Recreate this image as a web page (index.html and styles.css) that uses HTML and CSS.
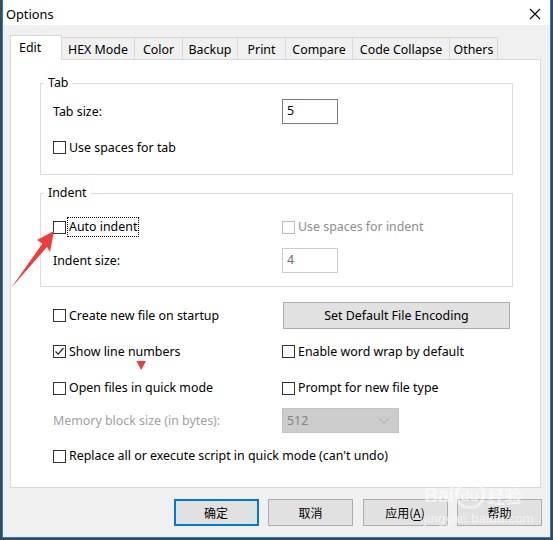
FILE: index.html
```html
<!DOCTYPE html>
<html>
<head>
<meta charset="utf-8">
<link rel="stylesheet" href="styles.css">
</head>
<body>
<div class="window">
  <div class="titlebar">
    <span class="title">Options</span>
    <svg class="close" width="12" height="12" viewBox="0 0 12 12"><path d="M1 1 L11 11 M11 1 L1 11" stroke="#000" stroke-width="1.1" fill="none"/></svg>
  </div>
  <div class="client">
    <div class="tabs">
      <div class="tab sel w-edit">Edit</div>
      <div class="tab w-hex">HEX Mode</div>
      <div class="tab w-color">Color</div>
      <div class="tab w-backup">Backup</div>
      <div class="tab w-print">Print</div>
      <div class="tab w-compare">Compare</div>
      <div class="tab w-code">Code Collapse</div>
      <div class="tab w-others last">Others</div>
    </div>
    <div class="panel">
      <fieldset class="group group-tab">
        <legend>Tab</legend>
        <div class="grow r-input">
          <span class="lbl">Tab size:</span>
          <div class="edit">5</div>
        </div>
        <div class="grow r-check2">
          <label class="chk"><span class="box"></span><span>Use spaces for tab</span></label>
        </div>
      </fieldset>
      <fieldset class="group group-indent">
        <legend>Indent</legend>
        <div class="grow r-auto">
          <label class="chk"><span class="box"></span><span class="focus">Auto indent</span></label>
          <label class="chk dis"><span class="box"></span><span>Use spaces for indent</span></label>
        </div>
        <div class="grow r-input2">
          <span class="lbl">Indent size:</span>
          <div class="edit dis">4</div>
        </div>
      </fieldset>
      <div class="opts">
        <label class="chk"><span class="box"></span><span>Create new file on startup</span></label>
        <div class="btn wide">Set Default File Encoding</div>
        <label class="chk"><span class="box on"><svg width="11" height="11" viewBox="0 0 11 11"><path d="M1.5 5.5 L4.2 8.2 L9.5 2" stroke="#222" stroke-width="1.2" fill="none"/></svg></span><span>Show line numbers</span></label>
        <label class="chk"><span class="box"></span><span>Enable word wrap by default</span></label>
        <label class="chk"><span class="box"></span><span>Open files in quick mode</span></label>
        <label class="chk"><span class="box"></span><span>Prompt for new file type</span></label>
        <span class="lbl dis">Memory block size (in bytes):</span>
        <div class="select"><span>512</span><svg width="10" height="6" viewBox="0 0 10 6"><path d="M0.5 0.5 L5 5 L9.5 0.5" stroke="#a8a8a8" stroke-width="1" fill="none"/></svg></div>
        <label class="chk span2"><span class="box"></span><span>Replace all or execute script in quick mode (can't undo)</span></label>
      </div>
    </div>
    <div class="buttons">
      <div class="btn dlg default">确定</div>
      <div class="btn dlg">取消</div>
      <div class="btn dlg">应用(<u>A</u>)</div>
      <div class="btn dlg">帮助</div>
    </div>
  </div>
</div>
<svg class="marks" width="553" height="540" viewBox="0 0 553 540">
  <polygon points="54,231 37,240 42.5,243.5 11,288 47,247 50,252" fill="#f23a3a"/>
  <polygon points="136.5,361 146,361 141.2,370" fill="#f23a3a"/>
</svg>
<div class="watermark" aria-hidden="true">
  <div class="wm-top"><span class="wm-bai">Bai</span><span class="wm-paw">du</span><span class="wm-jy">经验</span></div>
  <div class="wm-url">jingyan.baidu.com</div>
</div>
</body>
</html>
```
FILE: styles.css
```css
html, body {
  margin: 0;
  padding: 0;
}
body {
  width: 553px;
  height: 540px;
  background: #3d4855;
  position: relative;
  overflow: hidden;
  font-family: "Noto Sans", "Noto Sans CJK SC", sans-serif;
  font-size: 12.4px;
  color: #000;
}
.window {
  margin-left: 2px;
  width: 547px;
  height: 537px;
  border: 1px solid #1883d7;
  border-top: none;
  background: #f0f0f0;
  display: flex;
  flex-direction: column;
}
.titlebar {
  height: 25px;
  box-sizing: border-box;
  background: #fff;
  display: flex;
  align-items: center;
  justify-content: space-between;
  padding: 2px 9px 0 3px;
}
.title {
  font-size: 12.8px;
  line-height: 16px;
}
.close {
  display: block;
}
.client {
  flex: 1;
  padding: 10px 9px 0 7px;
  display: flex;
  flex-direction: column;
}
.tabs {
  height: 24px;
  display: flex;
  align-items: flex-end;
}
.tab {
  box-sizing: border-box;
  height: 22px;
  border: 1px solid #d9d9d9;
  border-right: none;
  border-bottom: none;
  background: #f0f0f0;
  text-align: center;
  line-height: 20px;
  padding-top: 2px;
  white-space: nowrap;
}
.tab.last {
  border-right: 1px solid #d9d9d9;
}
.tab.sel {
  height: 25px;
  margin-bottom: -1px;
  background: #fff;
  border-right: 1px solid #d9d9d9;
  position: relative;
  z-index: 1;
  text-align: left;
  padding-left: 8px;
  padding-top: 1px;
  line-height: 22px;
}
.tab.sel + .tab { border-left: none; }
.w-edit { width: 52px; }
.w-hex { width: 72px; }
.w-color { width: 48px; }
.w-backup { width: 55px; }
.w-print { width: 48px; }
.w-compare { width: 67px; }
.w-code { width: 97px; }
.w-others { width: 49px; }

.panel {
  box-sizing: border-box;
  height: 429px;
  border: 1px solid #d9d9d9;
  background: #fff;
  padding: 15px 27px 0 29px;
  display: flex;
  flex-direction: column;
}
.group {
  margin: 0;
  border: 1px solid #dcdcdc;
  padding: 0 12px;
  min-width: 0;
}
.group legend {
  padding: 0 4px;
  margin-left: -9px;
  line-height: 16px;
}
.group-tab {
  padding-top: 8px;
  padding-bottom: 18px;
}
.group-indent {
  margin-top: 10px;
  padding-top: 17px;
  padding-bottom: 13px;
}
.grow {
  display: grid;
  grid-template-columns: 229px 1fr;
  align-items: center;
}
.r-input { height: 25px; }
.r-check2 { height: 17px; margin-top: 15px; }
.r-auto { height: 18px; }
.r-input2 { height: 25px; margin-top: 12px; }

.lbl { line-height: 16px; }
.dis { color: #a0a0a0; }

.edit {
  box-sizing: border-box;
  width: 56px;
  height: 25px;
  border: 1px solid #7a7a7a;
  padding-left: 4px;
  line-height: 22px;
}
.edit.dis {
  border-color: #cccccc;
  color: #6d6d6d;
}

.chk {
  display: flex;
  align-items: center;
  white-space: nowrap;
  line-height: 16px;
}
.box {
  box-sizing: border-box;
  width: 13px;
  height: 13px;
  border: 1px solid #333;
  background: #fff;
  margin-right: 3px;
  flex: none;
  display: flex;
  align-items: center;
  justify-content: center;
}
.chk.dis .box { border-color: #bcbcbc; }
.chk.dis { color: #8c8c8c; }
.box svg { display: block; }
.focus {
  outline: 1px dotted #000;
  outline-offset: 0;
  padding: 1px 1px 1px 1px;
  margin-left: -1px;
}

.opts {
  margin-left: 13px;
  margin-top: 15px;
  display: grid;
  grid-template-columns: 229px 1fr;
  grid-template-rows: 27px 45px 28px 37px 34px;
  align-items: center;
}
.span2 { grid-column: 1 / 3; }

.btn {
  box-sizing: border-box;
  background: #e1e1e1;
  border: 1px solid #adadad;
  display: flex;
  align-items: center;
  justify-content: center;
  white-space: nowrap;
}
.btn.wide {
  width: 227px;
  height: 27px;
  margin-left: 1px;
}
.select {
  box-sizing: border-box;
  width: 117px;
  height: 25px;
  background: #cccccc;
  border: 1px solid #c2c2c2;
  color: #838383;
  display: flex;
  align-items: center;
  justify-content: space-between;
  padding: 0 9px 0 4px;
}
.select svg { display: block; }

.buttons {
  margin-top: 11px;
  display: flex;
  justify-content: flex-end;
  gap: 9.5px;
  margin-right: -1px;
}
.btn.dlg {
  width: 85px;
  height: 27px;
  font-family: "Noto Sans CJK SC", sans-serif;
  font-size: 12px;
}
.btn.dlg.default {
  border: 2px solid #0078d7;
}
.btn.dlg u { text-underline-offset: 2px; }

.marks {
  position: absolute;
  left: 0;
  top: 0;
  pointer-events: none;
}
.watermark {
  position: absolute;
  left: 424px;
  top: 478px;
  color: rgba(255, 255, 255, 0.6);
  pointer-events: none;
  font-family: "Liberation Sans", sans-serif;
}
.wm-top {
  display: flex;
  align-items: center;
  height: 34px;
}
.wm-bai {
  font-size: 20px;
  font-weight: bold;
  letter-spacing: -0.5px;
}
.wm-paw {
  font-size: 15px;
  font-weight: bold;
  width: 30px;
  height: 28px;
  border-radius: 14px;
  border: 3px solid rgba(255, 255, 255, 0.5);
  box-sizing: border-box;
  display: flex;
  align-items: center;
  justify-content: center;
  margin-left: 1px;
}
.wm-jy {
  font-family: "Noto Sans CJK SC", sans-serif;
  font-size: 17px;
  font-weight: bold;
  margin-left: 3px;
}
.wm-url {
  font-size: 13px;
  margin-top: -1px;
  letter-spacing: 0.3px;
}
```
